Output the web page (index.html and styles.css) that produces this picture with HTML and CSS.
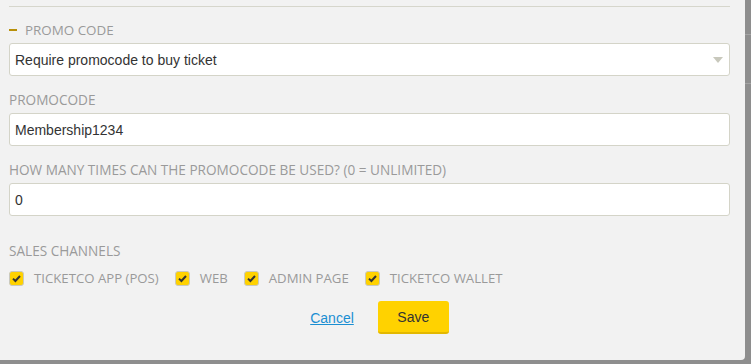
FILE: index.html
```html
<!DOCTYPE html>
<html lang="en">
<head>
    <meta charset="UTF-8">
    <title>Promo code</title>
    <link rel="stylesheet" href="styles.css">
</head>
<body>
    <div class="modal">
        <div class="divider"></div>
        <div class="section-title"><span class="collapse"></span>PROMO CODE</div>
        <div class="select">
            <span>Require promocode to buy ticket</span>
            <span class="caret"></span>
        </div>
        <label class="field-label">PROMOCODE</label>
        <div class="input">Membership1234</div>
        <label class="field-label">HOW MANY TIMES CAN THE PROMOCODE BE USED? (0 = UNLIMITED)</label>
        <div class="input">0</div>
        <label class="field-label channels-label">SALES CHANNELS</label>
        <div class="channels">
            <label class="channel"><span class="check"><svg viewBox="0 0 15 15" width="15" height="15"><path d="M4 7.6 L6.4 10 L11 5" fill="none" stroke="#333" stroke-width="2"/></svg></span>TICKETCO APP (POS)</label>
            <label class="channel"><span class="check"><svg viewBox="0 0 15 15" width="15" height="15"><path d="M4 7.6 L6.4 10 L11 5" fill="none" stroke="#333" stroke-width="2"/></svg></span>WEB</label>
            <label class="channel"><span class="check"><svg viewBox="0 0 15 15" width="15" height="15"><path d="M4 7.6 L6.4 10 L11 5" fill="none" stroke="#333" stroke-width="2"/></svg></span>ADMIN PAGE</label>
            <label class="channel"><span class="check"><svg viewBox="0 0 15 15" width="15" height="15"><path d="M4 7.6 L6.4 10 L11 5" fill="none" stroke="#333" stroke-width="2"/></svg></span>TICKETCO WALLET</label>
        </div>
        <div class="actions">
            <a href="#" class="cancel">Cancel</a>
            <button type="button" class="save">Save</button>
        </div>
    </div>
    <div class="backdrop">
        <div class="row"></div>
        <div class="row"></div>
    </div>
</body>
</html>
```

FILE: styles.css
```css
body {
    margin: 0;
    background: #8e8e8e;
    display: flex;
    align-items: flex-start;
    height: 364px;
    overflow: hidden;
}
.modal {
    width: 745px;
    height: 360px;
    padding: 0 15px 0 9px;
    box-sizing: border-box;
    flex-shrink: 0;
    background: #f2f2f2;
    border-bottom-right-radius: 4px;
    font-family: "Open Sans", sans-serif;
}
.divider {
    margin-top: 6px;
    height: 1px;
    background: #d6d6cc;
}
.section-title {
    margin-top: 15px;
    height: 16px;
    line-height: 16px;
    font-size: 13.4px;
    color: #9a9a9a;
    display: flex;
    align-items: center;
    margin-bottom: 5px;
}
.collapse {
    width: 8px;
    height: 2px;
    background: #b8900a;
    margin-right: 8px;
}
.select, .input {
    height: 33px;
    box-sizing: border-box;
    background: #fff;
    border: 1px solid #d4d4c8;
    border-radius: 3px;
    padding: 0 5px;
    display: flex;
    align-items: center;
    font-family: "Liberation Sans", Arial, sans-serif;
    font-size: 14px;
    color: #333;
}
.select {
    justify-content: space-between;
}
.caret {
    width: 0;
    height: 0;
    border-left: 5px solid transparent;
    border-right: 5px solid transparent;
    border-top: 6px solid #c8c8bc;
    margin-right: 1px;
}
.field-label {
    display: block;
    margin-top: 16px;
    margin-bottom: 5px;
    height: 16px;
    line-height: 16px;
    font-size: 13.6px;
    color: #9a9a9a;
}
.channels-label {
    margin-top: 27px;
    margin-bottom: 12px;
}
.channels {
    display: flex;
    gap: 16px;
    height: 15px;
}
.channel {
    display: flex;
    align-items: center;
    gap: 10px;
    font-size: 13.2px;
    color: #9a9a9a;
    line-height: 15px;
}
.check {
    width: 15px;
    height: 15px;
    box-sizing: border-box;
    background: #ffd200;
    border: 1px solid #c9c9c0;
    border-radius: 3px;
    display: flex;
    align-items: center;
    justify-content: center;
}
.check svg {
    flex-shrink: 0;
}
.actions {
    margin-top: 15px;
    padding-left: 20px;
    display: flex;
    justify-content: center;
    align-items: center;
    gap: 24px;
}
.cancel {
    font-family: "Liberation Sans", Arial, sans-serif;
    font-size: 14px;
    color: #1b8fd2;
}
.save {
    width: 71px;
    height: 33px;
    background: #ffd200;
    border: none;
    border-bottom: 2px solid #e3b800;
    border-radius: 3px;
    font-family: "Liberation Sans", Arial, sans-serif;
    font-size: 14px;
    color: #333;
    padding: 0;
}
.backdrop {
    flex: 1;
}
.row {
    height: 34px;
    border-bottom: 1px solid #a4a4a4;
}
.row + .row {
    height: 48px;
}
```
